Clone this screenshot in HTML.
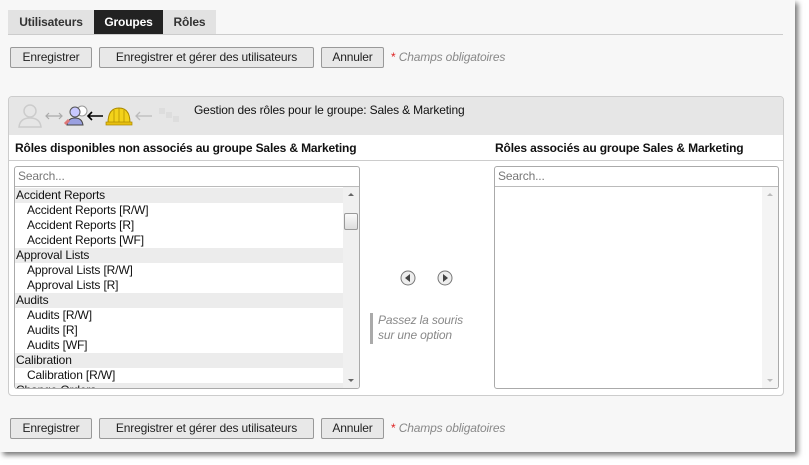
<!DOCTYPE html>
<html><head><meta charset="utf-8"><style>
body{margin:0;width:809px;height:465px;background:#fff;font-family:"Liberation Sans",Arial,sans-serif;font-size:12px;color:#222;position:relative;overflow:hidden;letter-spacing:-0.15px}
.page{position:absolute;left:0;top:0;width:795px;height:452px;background:#f7f7f7;box-shadow:3px 3px 5px #777}
.abs{position:absolute}
.tabs{left:8px;top:10px;height:24px;width:208px;background:#e2e2e2}
.tab{position:absolute;top:0;height:24px;line-height:24px;font-weight:bold;font-size:12px;color:#333;text-align:center}
.line{left:8px;top:34px;width:775px;height:1px;background:#ccc}
.btn{position:absolute;height:19px;line-height:19px;border:1px solid #999;background:#e8e8e8;border-radius:2px;text-align:center;font-size:12px;color:#222}
.req{position:absolute;font-style:italic;color:#888;font-size:12px}
.req b{color:#d22;font-style:normal;font-weight:normal}
.panel{left:8px;top:96px;width:774px;height:298px;border:1px solid #ccc;border-radius:4px;background:#fff;overflow:hidden}
.ph{position:absolute;left:0;top:0;width:774px;height:38px;background:#e6e6e6}
.sel{position:absolute;border:1px solid #aaa;border-radius:3px;background:#fff}
.search{position:absolute;left:0;top:0;right:0;height:19px;border-bottom:1px solid #bbb;color:#777;line-height:19px;padding-left:3px;font-size:12px}
.row{height:15px;line-height:15px;font-size:12px;color:#111;white-space:nowrap}
.g{background:#ececec;padding-left:1px}
.i{padding-left:12px}
.sb{position:absolute;right:0;width:16px;background:#f0f0f0}
</style></head><body>
<div class="page">
<div class="abs tabs">
 <div class="tab" style="left:0;width:86px">Utilisateurs</div>
 <div class="tab" style="left:86px;width:69px;background:#222;color:#fff">Groupes</div>
 <div class="tab" style="left:155px;width:53px">Rôles</div>
</div>
<div class="abs line"></div>

<div class="btn" style="left:10px;top:47px;width:80px">Enregistrer</div>
<div class="btn" style="left:99px;top:47px;width:213px">Enregistrer et gérer des utilisateurs</div>
<div class="btn" style="left:321px;top:47px;width:61px">Annuler</div>
<div class="req" style="left:391px;top:50px"><b>*</b> Champs obligatoires</div>

<div class="abs panel">
 <div class="ph"></div>
 <svg class="abs" style="left:6px;top:6px" width="180" height="26" viewBox="0 0 180 26">
  <circle cx="15" cy="8" r="6" fill="none" stroke="#ccc" stroke-width="1.5"/>
  <path d="M4 24 Q5 15 15 15 Q25 15 26 24 Z" fill="none" stroke="#ccc" stroke-width="1.5"/>
  <path d="M31 13 H47 M34 10 L31 13 L34 16 M44 10 L47 13 L44 16" stroke="#aaa" fill="none" stroke-width="1.2"/>
  <circle cx="67" cy="8" r="5" fill="#fff" stroke="#999"/>
  <circle cx="60" cy="9" r="5" fill="#c8c8ff" stroke="#555"/>
  <path d="M52 22 Q53 15 60 15 Q67 15 68 22 Z" fill="#9aa0e0" stroke="#444"/>
  <path d="M54 17 L50 21" stroke="#d77" stroke-width="3"/>
  <path d="M73 13 H88 M77 9 L73 13 L77 17" stroke="#000" fill="none" stroke-width="1.6"/>
  <path d="M93 20 Q93 5 104 5 Q115 5 115 20 Z" fill="#f3d21a" stroke="#a80"/>
  <rect x="91" y="19" width="26" height="3" fill="#e8c010" stroke="#a80" stroke-width=".7"/>
  <path d="M104 5 V19 M99 7 V19 M109 7 V19" stroke="#a80" stroke-width=".7"/>
  <path d="M121 13 H137 M125 9 L121 13 L125 17" stroke="#bbb" fill="none" stroke-width="1.3"/>
  <rect x="144" y="5" width="6" height="6" fill="#ddd"/><rect x="151" y="9" width="6" height="6" fill="#ddd"/><rect x="158" y="13" width="6" height="6" fill="#ddd"/>
 </svg>
 <div class="abs" style="left:185px;top:6px;font-size:12px;color:#111">Gestion des rôles pour le groupe: Sales &amp; Marketing</div>
 <div class="abs" style="left:6px;top:44px;font-weight:bold;color:#111">Rôles disponibles non associés au groupe Sales &amp; Marketing</div>
 <div class="abs" style="left:486px;top:44px;font-weight:bold;color:#111">Rôles associés au groupe Sales &amp; Marketing</div>
 <div class="abs" style="left:0;top:63px;width:774px;height:1px;background:#ccc"></div>

 <div class="sel" style="left:5px;top:69px;width:344px;height:221px;overflow:hidden">
  <div class="search">Search...</div>
  <div class="abs" style="left:0;top:21px;width:328px">
   <div class="row g">Accident Reports</div>
   <div class="row i">Accident Reports [R/W]</div>
   <div class="row i">Accident Reports [R]</div>
   <div class="row i">Accident Reports [WF]</div>
   <div class="row g">Approval Lists</div>
   <div class="row i">Approval Lists [R/W]</div>
   <div class="row i">Approval Lists [R]</div>
   <div class="row g">Audits</div>
   <div class="row i">Audits [R/W]</div>
   <div class="row i">Audits [R]</div>
   <div class="row i">Audits [WF]</div>
   <div class="row g">Calibration</div>
   <div class="row i">Calibration [R/W]</div>
   <div class="row g">Change Orders</div>
  </div>
  <div class="sb" style="top:20px;bottom:0">
   <div style="position:absolute;left:5px;top:6px;border:3px solid transparent;border-bottom:3px solid #666;border-top:0"></div>
   <div style="position:absolute;left:1px;top:26px;width:12px;height:15px;border:1px solid #999;background:linear-gradient(#fafafa,#ddd);border-radius:2px"></div>
   <div style="position:absolute;left:5px;bottom:6px;border:3px solid transparent;border-top:3px solid #666;border-bottom:0"></div>
  </div>
 </div>

 <svg class="abs" style="left:391px;top:173px" width="56" height="18">
  <circle cx="8" cy="8" r="7" fill="#eee" stroke="#777"/><path d="M10 4 L5 8 L10 12 Z" fill="#444"/>
  <circle cx="45" cy="8" r="7" fill="#eee" stroke="#777"/><path d="M43 4 L48 8 L43 12 Z" fill="#444"/>
 </svg>
 <div class="abs" style="left:361px;top:216px;width:3px;height:31px;background:#aaa"></div>
 <div class="abs" style="left:369px;top:216px;font-style:italic;color:#888;line-height:15px">Passez la souris<br>sur une option</div>

 <div class="sel" style="left:485px;top:69px;width:283px;height:221px;overflow:hidden">
  <div class="search">Search...</div>
  <div class="sb" style="top:20px;bottom:0;background:#f4f4f4">
   <div style="position:absolute;left:5px;top:6px;border:3px solid transparent;border-bottom:3px solid #bbb;border-top:0"></div>
   <div style="position:absolute;left:5px;bottom:6px;border:3px solid transparent;border-top:3px solid #bbb;border-bottom:0"></div>
  </div>
 </div>
</div>

<div class="btn" style="left:10px;top:418px;width:80px">Enregistrer</div>
<div class="btn" style="left:99px;top:418px;width:213px">Enregistrer et gérer des utilisateurs</div>
<div class="btn" style="left:321px;top:418px;width:61px">Annuler</div>
<div class="req" style="left:391px;top:421px"><b>*</b> Champs obligatoires</div>
</div>
</body></html>
